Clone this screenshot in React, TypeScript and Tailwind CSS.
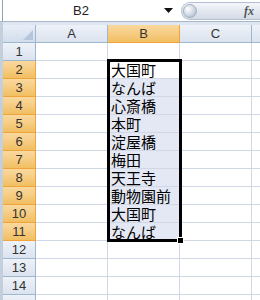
const rows = [
  { n: 1, v: "" },
  { n: 2, v: "大国町" },
  { n: 3, v: "なんば" },
  { n: 4, v: "心斎橋" },
  { n: 5, v: "本町" },
  { n: 6, v: "淀屋橋" },
  { n: 7, v: "梅田" },
  { n: 8, v: "天王寺" },
  { n: 9, v: "動物園前" },
  { n: 10, v: "大国町" },
  { n: 11, v: "なんば" },
  { n: 12, v: "" },
  { n: 13, v: "" },
  { n: 14, v: "" },
  { n: 15, v: "" },
];

const jp = "font-['MS_PGothic','Noto_Sans_CJK_JP',sans-serif]";

export default function App() {
  return (
    <div className="w-[260px] h-[300px] overflow-hidden bg-white font-['Liberation_Sans',Arial,sans-serif] flex flex-col">
      {/* formula bar */}
      <div className="h-[22px] flex items-stretch border-b border-[#a7b6ca] bg-white pl-[2px] shrink-0">
        <div className="border-l border-[#8ea2bd] flex-1 flex items-center">
          <div className="w-[156px] text-center text-[13px] text-[#222]">B2</div>
          <div className="w-[18px] flex items-center justify-center">
            <svg width="9" height="5" viewBox="0 0 9 5">
              <path d="M0 0 H9 L4.5 5 Z" fill="#111" />
            </svg>
          </div>
          <div className="h-[18px] flex-1 ml-[4px] rounded-l-full border border-[#b4c0d0] border-r-0 bg-gradient-to-b from-[#f4f6fa] via-[#e3e8f0] to-[#d4dbe6] flex items-center justify-between pl-[1px] pr-[6px]">
            <div className="w-[14px] h-[14px] rounded-full bg-[radial-gradient(circle_at_35%_35%,#ffffff,#c9d2de_60%,#9eabbd)] border border-[#a3b0c2]" />
            <span className="font-['Liberation_Serif',serif] italic font-bold text-[12px] text-[#555]">fx</span>
          </div>
        </div>
      </div>
      <div className="h-[3px] bg-[#dde6f1] shrink-0 border-l-[3px] border-[#c3cfdd]" />

      {/* sheet */}
      <div className="relative flex-1 flex flex-col border-l-[3px] border-[#c3cfdd]">
        {/* column headers */}
        <div className="flex h-[18px] shrink-0 text-[13px] text-[#333]">
          <div className="w-[33px] border-r border-b border-[#9eb6ce] bg-gradient-to-b from-[#e8eef7] to-[#d2ddec] relative">
            <svg className="absolute right-[2px] bottom-[2px]" width="10" height="10" viewBox="0 0 10 10">
              <path d="M10 0 V10 H0 Z" fill="#b5c6da" />
            </svg>
          </div>
          <div className="w-[72px] border-r border-b border-[#9eb6ce] bg-gradient-to-b from-[#eef2f8] to-[#dbe3ef] flex items-center justify-center">A</div>
          <div className="w-[72px] border-r border-b border-[#f2a43c] bg-gradient-to-b from-[#f9d99f] to-[#f2bf62] flex items-center justify-center">B</div>
          <div className="w-[72px] border-r border-b border-[#9eb6ce] bg-gradient-to-b from-[#eef2f8] to-[#dbe3ef] flex items-center justify-center">C</div>
          <div className="flex-1 border-b border-[#9eb6ce] bg-gradient-to-b from-[#eef2f8] to-[#dbe3ef]" />
        </div>

        {rows.map((r) => {
          const sel = r.n >= 2 && r.n <= 11;
          return (
            <div key={r.n} className="flex h-[18px] shrink-0">
              <div
                className={
                  sel
                    ? "w-[33px] border-r border-b border-[#f2a43c] bg-gradient-to-b from-[#f9d99f] to-[#f2bf62] flex items-center justify-center text-[13px] text-[#333]"
                    : "w-[33px] border-r border-b border-[#9eb6ce] bg-gradient-to-b from-[#eef2f8] to-[#dbe3ef] flex items-center justify-center text-[13px] text-[#333]"
                }
              >
                {r.n < 15 ? r.n : null}
              </div>
              <div className="w-[72px] border-r border-b border-[#d0d7e5]" />
              <div
                className={
                  sel && r.n !== 2
                    ? `w-[72px] border-r border-b border-[#d0d7e5] bg-[#e3e8f4] pl-[3px] flex items-center text-[15px] leading-none text-black ${jp}`
                    : `w-[72px] border-r border-b border-[#d0d7e5] bg-white pl-[3px] flex items-center text-[15px] leading-none text-black ${jp}`
                }
              >
                {r.v}
              </div>
              <div className="w-[72px] border-r border-b border-[#d0d7e5]" />
              <div className="flex-1 border-b border-[#d0d7e5]" />
            </div>
          );
        })}

        {/* selection outline */}
        <div className="absolute left-[104px] top-[34px] w-[75px] h-[183px] border-[3px] border-black pointer-events-none">
          <div className="absolute -right-[5px] -bottom-[5px] w-[7px] h-[7px] bg-black border border-white" />
        </div>
      </div>
    </div>
  );
}
